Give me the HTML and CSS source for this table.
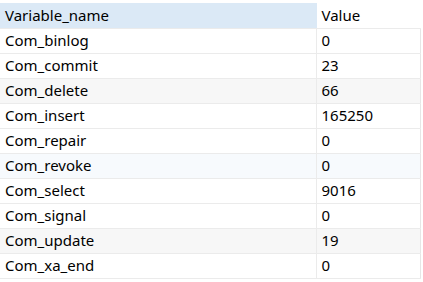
FILE: index.html
```html
<!DOCTYPE html>
<html lang="en">
<head>
    <meta charset="UTF-8">
    <title>Status variables</title>
    <link rel="stylesheet" href="styles.css">
</head>
<body>

<!-- Result Grid -->
<table class="grid">
    <thead>
        <tr>
            <th class="col-name active">Variable_name</th>
            <th class="col-value">Value</th>
        </tr>
    </thead>
    <tbody>
        <tr><td>Com_binlog</td><td>0</td></tr>
        <tr><td>Com_commit</td><td>23</td></tr>
        <tr class="shade"><td>Com_delete</td><td>66</td></tr>
        <tr><td>Com_insert</td><td>165250</td></tr>
        <tr><td>Com_repair</td><td>0</td></tr>
        <tr class="tint"><td>Com_revoke</td><td>0</td></tr>
        <tr><td>Com_select</td><td>9016</td></tr>
        <tr><td>Com_signal</td><td>0</td></tr>
        <tr class="shade"><td>Com_update</td><td>19</td></tr>
        <tr><td>Com_xa_end</td><td>0</td></tr>
    </tbody>
</table>

</body>
</html>
```

FILE: styles.css
```css
/* General Styling */
body {
    margin: 0;
    padding-top: 3px;
    background: #ffffff;
    font-family: 'Noto Sans', 'Open Sans', sans-serif;
    font-size: 15px;
    color: #000000;
}

.grid {
    border-collapse: collapse;
    width: 421px;
    table-layout: fixed;
}

.grid th,
.grid td {
    height: 25px;
    padding: 0 0 0 5px;
    box-sizing: border-box;
    text-align: left;
    font-weight: normal;
    white-space: nowrap;
    border-bottom: 1px solid #ebebeb;
    border-right: 1px solid #ebebeb;
    line-height: 23px;
}

.col-name {
    width: 316px;
}

.grid th.active {
    background-color: #dbe9f6;
    border-right-color: #dbe9f6;
}

.grid th.col-value {
    border-right-color: #ffffff;
}

.grid tr td:last-child {
    border-right-color: #e6e6e6;
}

.grid tr.shade td {
    background-color: #f7f7f7;
}

.grid tr.tint td {
    background-color: #f7fafd;
}
```
